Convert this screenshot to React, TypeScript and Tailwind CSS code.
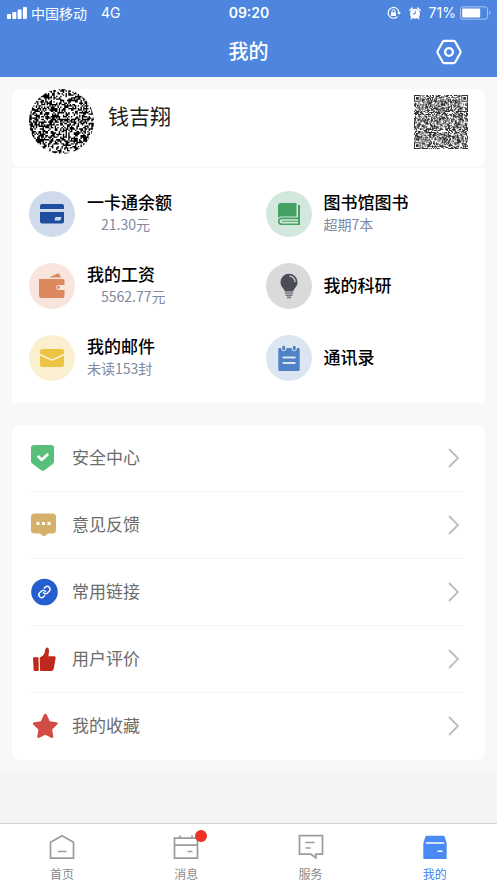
import type { ReactNode } from "react";

const FONT = "font-['Noto_Sans_CJK_SC','Noto_Sans',sans-serif]";

function noisePath(size: number, seed: number, finders: boolean) {
  let state = seed;
  let d = "";
  for (let y = 0; y < size; y++) {
    for (let x = 0; x < size; x++) {
      state = (Math.imul(state, 1664525) + 1013904223) >>> 0;
      const inFinder =
        finders && ((x < 8 && y < 8) || (x >= size - 8 && y < 8) || (x < 8 && y >= size - 8));
      if (!inFinder && state / 4294967296 < 0.54) d += `M${x} ${y}h1v1h-1z`;
    }
  }
  if (finders) {
    for (const [x, y] of [[0, 0], [size - 7, 0], [0, size - 7]]) {
      d += `M${x} ${y}h7v7h-7zM${x + 1} ${y + 1}v5h5v-5zM${x + 2} ${y + 2}h3v3h-3z`;
    }
  }
  return d;
}

const AVATAR = noisePath(48, 77, false);
const QR = noisePath(57, 2024, true);

function StatusBar() {
  return (
    <div className="grid h-[26px] grid-cols-3 items-center pl-[7px] pr-1.5 text-sm">
      <div className="flex items-center">
        <svg width="20" height="12" viewBox="0 0 20 12" fill="currentColor" aria-hidden="true">
          <rect x="0" y="7" width="4" height="5" rx="1" />
          <rect x="5.3" y="5" width="4" height="7" rx="1" />
          <rect x="10.6" y="2.5" width="4" height="9.5" rx="1" />
          <rect x="15.9" y="0" width="4" height="12" rx="1" />
        </svg>
        <span className="ml-1 whitespace-nowrap">中国移动</span>
        <span className="ml-3.5 font-['Inter',sans-serif]">4G</span>
      </div>
      <div className="text-center font-['Inter',sans-serif] font-semibold">09:20</div>
      <div className="flex items-center justify-end">
        <svg width="14" height="14" viewBox="0 0 14 14" fill="none" stroke="currentColor" aria-hidden="true">
          <path d="M10.5 10.6A5.4 5.4 0 1 1 12 6.5" strokeWidth="1.2" />
          <path d="M10.2 6.2h3.8L12.1 8.8z" fill="currentColor" stroke="none" />
          <rect x="4" y="6.2" width="5" height="3.8" rx=".4" fill="currentColor" stroke="none" />
          <path d="M5 6.4V5.2a1.5 1.5 0 0 1 3 0v1.2" />
        </svg>
        <svg className="ml-2" width="12" height="13" viewBox="0 0 12 13" aria-hidden="true">
          <circle cx="6" cy="6.7" r="5" fill="currentColor" />
          <path d="M.9 3.2 3.3 1M11.1 3.2 8.7 1M2.8 10.8l-.6.8M9.2 10.8l.6.8" stroke="currentColor" strokeWidth="1.5" strokeLinecap="round" />
          <path d="M6.2 3.8v3H3.8" fill="none" stroke="#4e86df" strokeWidth="1" />
        </svg>
        <span className="ml-2 font-['Inter',sans-serif]">71%</span>
        <svg className="ml-1" width="31" height="14" viewBox="0 0 31 14" aria-hidden="true">
          <rect x=".5" y=".8" width="27" height="12.4" rx="2.5" fill="none" stroke="currentColor" strokeOpacity=".5" />
          <rect x="2.2" y="2.5" width="18" height="9" rx="1" fill="currentColor" />
          <path d="M29.2 4.8c1.6.6 1.6 3.8 0 4.4z" fill="currentColor" fillOpacity=".5" />
        </svg>
      </div>
    </div>
  );
}

function Header() {
  return (
    <header className="bg-[#4e86df] text-white">
      <StatusBar />
      <div className="grid h-[51px] grid-cols-[1fr_auto_1fr] items-center px-[35px]">
        <span />
        <h1 className="pb-0.5 text-xl font-medium">我的</h1>
        <button className="justify-self-end" aria-label="设置">
          <svg width="26" height="26" viewBox="0 0 26 26" fill="none" stroke="currentColor" strokeWidth="2.1" aria-hidden="true">
            <path d="M8.2 1.9h9.6q.9 0 1.4.8l5 9q.7 1.3 0 2.6l-5 9q-.5.8-1.4.8H8.2q-.9 0-1.4-.8l-5-9q-.7-1.3 0-2.6l5-9q.5-.8 1.4-.8z" />
            <circle cx="13" cy="13" r="3.9" strokeWidth="2.4" />
          </svg>
        </button>
      </div>
    </header>
  );
}

const CardIcon = (
  <svg width="26" height="22" viewBox="0 0 26 22" fill="#1f4e9e" aria-hidden="true">
    <path d="M3 1h20q2 0 2 2v3H1V3q0-2 2-2zM1 9h24v9.500q0 2-2 2H3q-2 0-2-2z" />
    <path d="M16.500 14h6l-1.200 3.600h-6z" fill="#cfdbeb" />
  </svg>
);
const BookIcon = (
  <svg width="24" height="24" viewBox="0 0 24 24" fill="#46a063" aria-hidden="true">
    <path d="M4 1h15.500v13.500H3.800Q2 14.500 1 16V4q0-3 3-3zM21 3h2v20H4.500Q1 23 1 19.500 1 15.600 4.500 15.600H21zM4.800 17.200q-2.200 0-2.200 2.100t2.200 2.100H21v-1.700H5v-1h16v-1.500z" />
  </svg>
);
const WalletIcon = (
  <svg width="28" height="26" viewBox="0 0 28 26" fill="#dc875d" aria-hidden="true">
    <path d="m11 4.600 7.500-3.700q2.200-1 3.300.8l1 2.900zM3.500 6H25q1.500 0 1.500 1.500v4.600H21q-2.800 0-2.800 2.400T21 16.900h5.500V23q0 2-2 2h-21Q1 25 1 22.500V7q0-1.500 1.200-1.300z" />
    <circle cx="20.500" cy="14.500" r="1.400" />
  </svg>
);
const BulbIcon = (
  <svg width="20" height="26" viewBox="0 0 20 26" fill="#4b4d56" aria-hidden="true">
    <path d="M10 .8a8.400 8.400 0 0 1 8.500 8.500c0 4.600-3.400 5.600-4.400 9.200H5.900C4.900 14.900 1.500 13.900 1.500 9.300A8.400 8.400 0 0 1 10 .8z" />
    <path d="M11 3.200q4.500.8 5 5.300" fill="none" stroke="#d5d5d8" strokeWidth="1.300" strokeLinecap="round" />
    <path d="M5.900 19.200h8.200v1.600H5.900zM6.400 21.400h7.200V23H6.400zM8 23.500h4v1.800H8z" fill="#777982" />
  </svg>
);
const MailIcon = (
  <svg width="26" height="20" viewBox="0 0 26 20" fill="#edc343" aria-hidden="true">
    <path d="M3 1h20q2 0 2 2v2.800L13 11.200 1 5.800V3q0-2 2-2zM1 7.500l12 5.600 12-5.600V17q0 2-2 2H3q-2 0-2-2z" />
  </svg>
);
const ContactsIcon = (
  <svg width="24" height="26" viewBox="0 0 24 26" fill="#5182c5" aria-hidden="true">
    <path d="M2.500 3H4q.5 3.300 2.800 3.300T9.400 3h5.200q.4 3.300 2.600 3.300T20 3h1.500q1.200 0 1.200 1.200V25q0 1-1 1H2.300q-1 0-1-1V4.200Q1.300 3 2.500 3z" />
    <rect x="5.300" y=".8" width="2.800" height="4.700" rx="1.400" />
    <rect x="15.900" y=".8" width="2.800" height="4.700" rx="1.400" />
    <path d="M6.300 12.500h11.500M6.300 18h11.500" stroke="#dbe6f2" strokeWidth="2" strokeLinecap="round" />
  </svg>
);

type Service = { name: string; detail?: string; indent?: boolean; bg: string; icon: ReactNode };

const services: Service[] = [
  { name: "一卡通余额", detail: "21.30元", indent: true, bg: "bg-[#cfdbeb]", icon: CardIcon },
  { name: "图书馆图书", detail: "超期7本", bg: "bg-[#d2e8dd]", icon: BookIcon },
  { name: "我的工资", detail: "5562.77元", indent: true, bg: "bg-[#f8e5dd]", icon: WalletIcon },
  { name: "我的科研", bg: "bg-[#dadadb]", icon: BulbIcon },
  { name: "我的邮件", detail: "未读153封", bg: "bg-[#faf0d0]", icon: MailIcon },
  { name: "通讯录", bg: "bg-[#dbe6f2]", icon: ContactsIcon },
];

function ServiceItem({ name, detail, indent, bg, icon }: Service) {
  return (
    <button className="flex h-[72px] items-center gap-3 pl-[17px] text-left">
      <span className={`flex size-[46px] shrink-0 items-center justify-center rounded-full ${bg}`}>{icon}</span>
      <span className="flex flex-col pb-[3px]">
        <span className="text-[17px] leading-[22px] font-medium text-black">{name}</span>
        {detail && (
          <span className={`text-sm leading-[22px] text-[#7f89a0] ${indent ? "pl-3.5" : ""}`}>{detail}</span>
        )}
      </span>
    </button>
  );
}

const ShieldIcon = (
  <svg width="28" height="28" viewBox="0 0 28 28" aria-hidden="true">
    <path d="M4 1h17q3 0 3 3v13.500q0 1.500-1.200 2.400l-8 6.200q-2 1.300-4 0l-8-6.200Q1 19 1 17.500V4q0-3 3-3z" fill="#58bf7a" />
    <path d="m8.500 12.700 3.300 3 5.500-5" fill="none" stroke="#fff" strokeWidth="2.800" strokeLinecap="round" strokeLinejoin="round" />
  </svg>
);
const FeedbackIcon = (
  <svg width="28" height="26" viewBox="0 0 28 26" aria-hidden="true">
    <path d="M5 1.500h17.500q3.500 0 3.500 3.500v13q0 3.500-3.500 3.500H18l-2.500 1.900q-1.500 1-3 0L10 21.500H5q-4 0-4-3.500V5q0-3.500 4-3.500z" fill="#d4b06a" />
    <path d="M6.500 10h3v3h-3zM12 10h3v3h-3zM17.500 10h3v3h-3z" fill="#fff" />
  </svg>
);
const LinkIcon = (
  <svg width="28" height="28" viewBox="0 0 28 28" aria-hidden="true">
    <circle cx="14.500" cy="14" r="13.300" fill="#255fcf" />
    <g transform="translate(7.700 7.300) scale(.56)" fill="none" stroke="#fff" strokeWidth="2.500" strokeLinecap="round" strokeLinejoin="round">
      <path d="M10 13a5 5 0 0 0 7.540.54l3-3a5 5 0 0 0-7.070-7.070l-1.720 1.710" />
      <path d="M14 11a5 5 0 0 0-7.540-.54l-3 3a5 5 0 0 0 7.070 7.070l1.710-1.710" />
    </g>
  </svg>
);
const ThumbIcon = (
  <svg width="28" height="26" viewBox="0 0 28 26" fill="#bf291c" aria-hidden="true">
    <path d="M4 11.200h3.700q.8 0 .8.800l.3 12q0 1-.8 1H4.600q-.8 0-.9-.8L3 12.200q0-1 1-1zM9.700 12.200q0-.8 1-1.200 3.800-2 4.300-6 .4-3.600 2-3.600 2.200 0 2 4l-.6 4.800h6q1.500 0 1.300 1.500l-1.600 9Q23.500 25 21.500 25H11.200Q10 25 10 24z" />
  </svg>
);
const StarIcon = (
  <svg width="28" height="26" viewBox="0 0 28 26" fill="#d24c46" aria-hidden="true">
    <path d="M13.800 1.800q1.500-2 3 0l3 6.500 6.600 1q2.200.6.800 2.300l-5 4.800 1.100 7.100q0 2-2 1.300L15.300 21.700 9.200 24.800q-2 .7-1.900-1.300l1.100-7.100-5.100-4.800q-1.200-1.700.8-2.300l6.800-1z" />
  </svg>
);

const menu = [
  { label: "安全中心", icon: ShieldIcon },
  { label: "意见反馈", icon: FeedbackIcon },
  { label: "常用链接", icon: LinkIcon },
  { label: "用户评价", icon: ThumbIcon },
  { label: "我的收藏", icon: StarIcon },
];

function MenuRow({ label, icon }: { label: string; icon: ReactNode }) {
  return (
    <li className="border-b border-[#f5f5f5] last:border-transparent">
      <button className="flex h-[66px] w-full items-center pr-1 text-left">
        <span className="flex w-[30px] justify-center">{icon}</span>
        <span className="ml-[13px] flex-1 pb-0.5 text-[17px] text-[#6c6c6c]">{label}</span>
        <svg width="12" height="20" viewBox="0 0 12 20" fill="none" stroke="#bdbdbd" strokeWidth="1.800" strokeLinecap="round" aria-hidden="true">
          <path d="m1.500 1.500 8.500 8.500-8.500 8.500" />
        </svg>
      </button>
    </li>
  );
}

const HomeIcon = (
  <svg width="26" height="26" viewBox="0 0 26 26" fill="none" stroke="#9b9b9b" strokeWidth="1.700" aria-hidden="true">
    <path d="M1.500 8.200 13 1.700l11.500 6.500v16h-23zM9 17.500h8.500" />
  </svg>
);
const MessageIcon = (
  <svg width="26" height="26" viewBox="0 0 26 26" fill="none" stroke="#9b9b9b" strokeWidth="1.700" aria-hidden="true">
    <path d="M1.500 4.200h23v20h-23zM1.500 11.200h23M7.200 1.500v3M19 1.500v3M14.500 17.500h5" />
  </svg>
);
const ServeIcon = (
  <svg width="26" height="26" viewBox="0 0 26 26" fill="none" stroke="#9b9b9b" strokeWidth="1.700" aria-hidden="true">
    <path d="M1.500 1.700h23v18.500h-6.700v3.600L13 20.200H1.500zM7.500 8.500h9M7.500 14h5" />
  </svg>
);
const MineIcon = (
  <svg width="26" height="26" viewBox="0 0 26 26" fill="#4a8af4" aria-hidden="true">
    <path d="M5 1.800h16q1.300 0 1.700 1l1.600 5.200q.4 1 .4 2v14.500q0 .5-.5.500H1.800q-.5 0-.5-.5V10q0-1 .4-2l1.600-5.200q.4-1 1.700-1z" />
    <path d="M3.800 9h18.400M15.500 17.200h5" stroke="#fff" strokeWidth="1.600" />
  </svg>
);

const tabs = [
  { label: "首页", icon: HomeIcon },
  { label: "消息", icon: MessageIcon, dot: true },
  { label: "服务", icon: ServeIcon },
  { label: "我的", icon: MineIcon, active: true },
];

export default function App() {
  return (
    <div className={`flex min-h-screen flex-col bg-[#f4f4f4] ${FONT}`}>
      <Header />
      <main className="bg-[#f7f8fa] p-3">
        <section className="flex h-[78px] items-start justify-between rounded-lg bg-white px-[17px]">
          <div className="flex gap-3.5">
            <svg className="rounded-full" width="65" height="65" viewBox="0 0 48 48" role="img" aria-label="头像">
              <rect width="48" height="48" fill="#fff" />
              <path d={AVATAR} fill="#000" />
            </svg>
            <span className="pt-2.5 text-[21px] leading-8 text-[#1c1c1c]">钱吉翔</span>
          </div>
          <svg className="mt-1.5" width="54" height="54" viewBox="0 0 57 57" role="img" aria-label="二维码">
            <path d={QR} fill="#333" />
          </svg>
        </section>
        <section className="mt-px grid grid-cols-2 bg-white pt-2.5 pb-[9px]">
          {services.map((s) => (
            <ServiceItem key={s.name} {...s} />
          ))}
        </section>
        <ul className="mt-[22px] rounded-lg bg-white pr-[21px] pl-[17px]">
          {menu.map((m) => (
            <MenuRow key={m.label} {...m} />
          ))}
        </ul>
      </main>
      <nav className="mt-auto grid h-[60px] grid-cols-4 border-t border-[#d4d4d4] bg-white">
        {tabs.map((t) => (
          <button key={t.label} className="flex flex-col items-center pt-2.5">
            <span className="relative">
              {t.icon}
              {t.dot && <span className="absolute -top-1 -right-2 size-3 rounded-full bg-[#eb3323]" />}
            </span>
            <span className={`mt-1 text-xs leading-5 ${t.active ? "text-[#3d7ff5]" : "text-[#8a8a8a]"}`}>{t.label}</span>
          </button>
        ))}
      </nav>
    </div>
  );
}
